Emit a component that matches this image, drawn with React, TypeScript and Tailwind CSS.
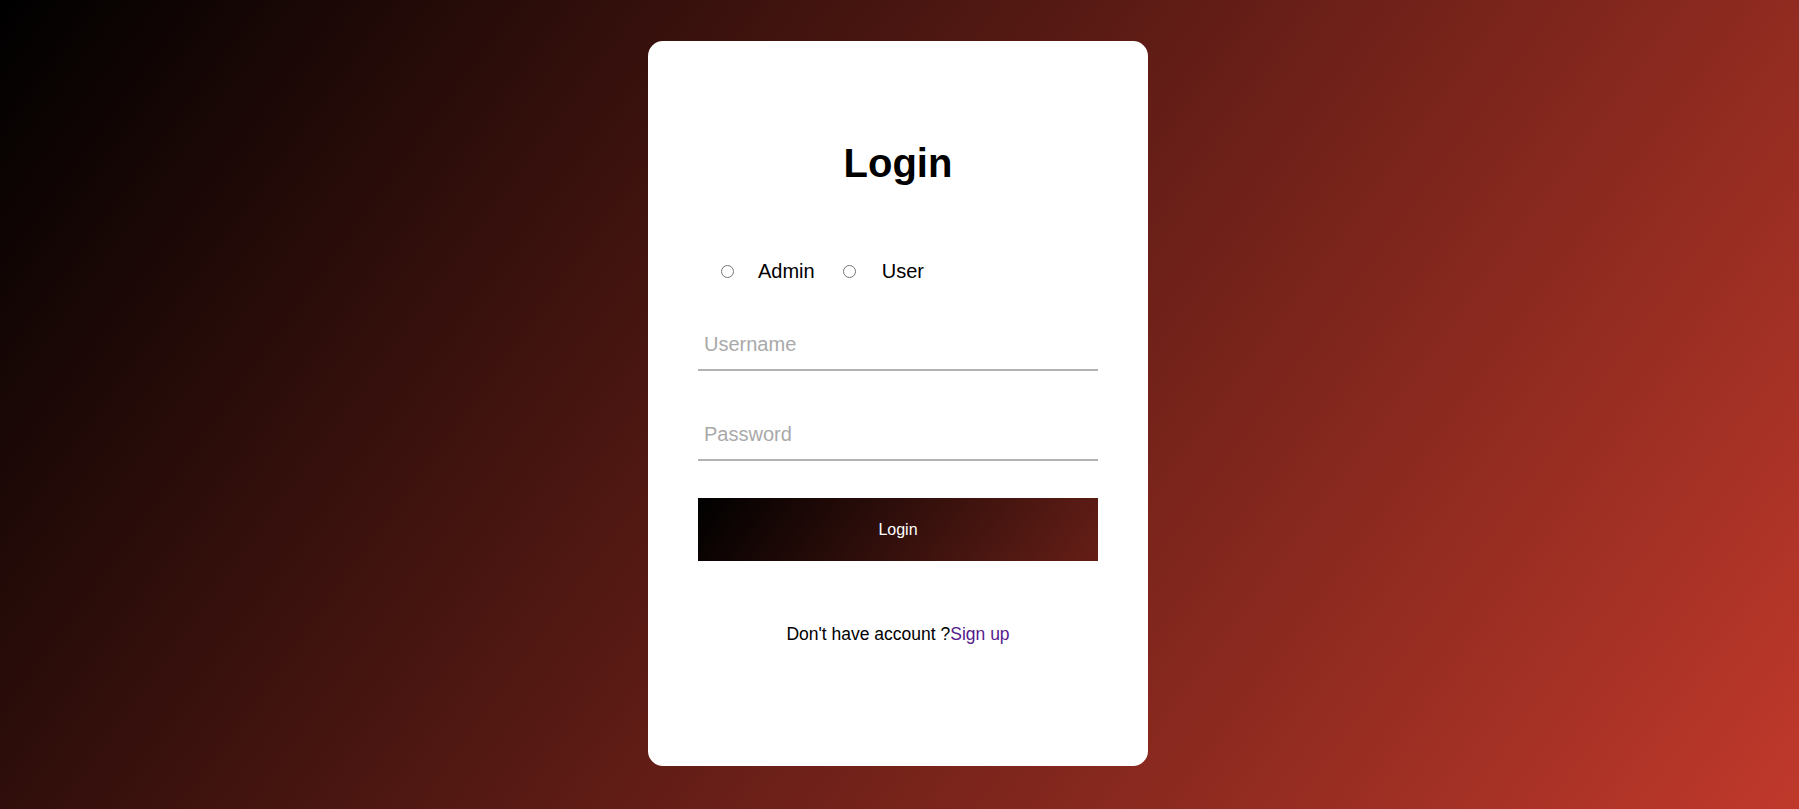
import { useState } from 'react';

// ── ROLE PICKER ────────────────────────────────────────────────
function RolePicker({ role, onChange }: { role: string; onChange: (r: string) => void }) {
  return (
    <div className="flex items-center h-[20px] mt-[78px] pl-[23px] text-[20px] leading-[20px] text-black">
      <input
        type="radio"
        name="role"
        checked={role === 'admin'}
        onChange={() => onChange('admin')}
        className="m-0 w-[13px] h-[13px]"
      />
      <label className="ml-[24px]">Admin</label>
      <input
        type="radio"
        name="role"
        checked={role === 'user'}
        onChange={() => onChange('user')}
        className="m-0 ml-[28px] w-[13px] h-[13px]"
      />
      <label className="ml-[26px]">User</label>
    </div>
  );
}

// ── UNDERLINED INPUT ───────────────────────────────────────────
function Field({ type, placeholder, className }: { type: string; placeholder: string; className?: string }) {
  return (
    <input
      type={type}
      placeholder={placeholder}
      className={
        'block w-full pt-[10px] pb-[13px] px-[6px] text-[20px] leading-[23px] text-black outline-none border-0 border-b-2 border-[#b3b3b3] placeholder:text-[#a9a9a9] ' +
        (className || '')
      }
    />
  );
}

export default function App() {
  const [role, setRole] = useState('');

  return (
    <div
      className="min-h-screen w-full flex items-center justify-center bg-[linear-gradient(126deg,#000000,#c0392b)]"
      style={{ fontFamily: '"Liberation Sans", Arial, sans-serif' }}
    >
      <div className="w-[500px] h-[725px] bg-white rounded-[15px] px-[50px] pt-[102px] flex flex-col -ml-[3px] -mt-[2px]">
        <h1 className="text-center text-[40px] leading-[40px] font-bold text-black">Login</h1>

        <RolePicker role={role} onChange={setRole} />

        <Field type="text" placeholder="Username" className="mt-[42px]" />
        <Field type="password" placeholder="Password" className="mt-[42px]" />

        <button
          type="button"
          className="mt-[37px] h-[63px] w-full text-white text-[16px] bg-[linear-gradient(126deg,#000000,#c0392b)] bg-[length:200%_100%] bg-left cursor-pointer"
        >
          Login
        </button>

        <p className="mt-[63px] text-center text-[17.5px] leading-[20px] text-black">
          Don't have account ?<a href="#" className="text-[#551a8b]">Sign up</a>
        </p>
      </div>
    </div>
  );
}
